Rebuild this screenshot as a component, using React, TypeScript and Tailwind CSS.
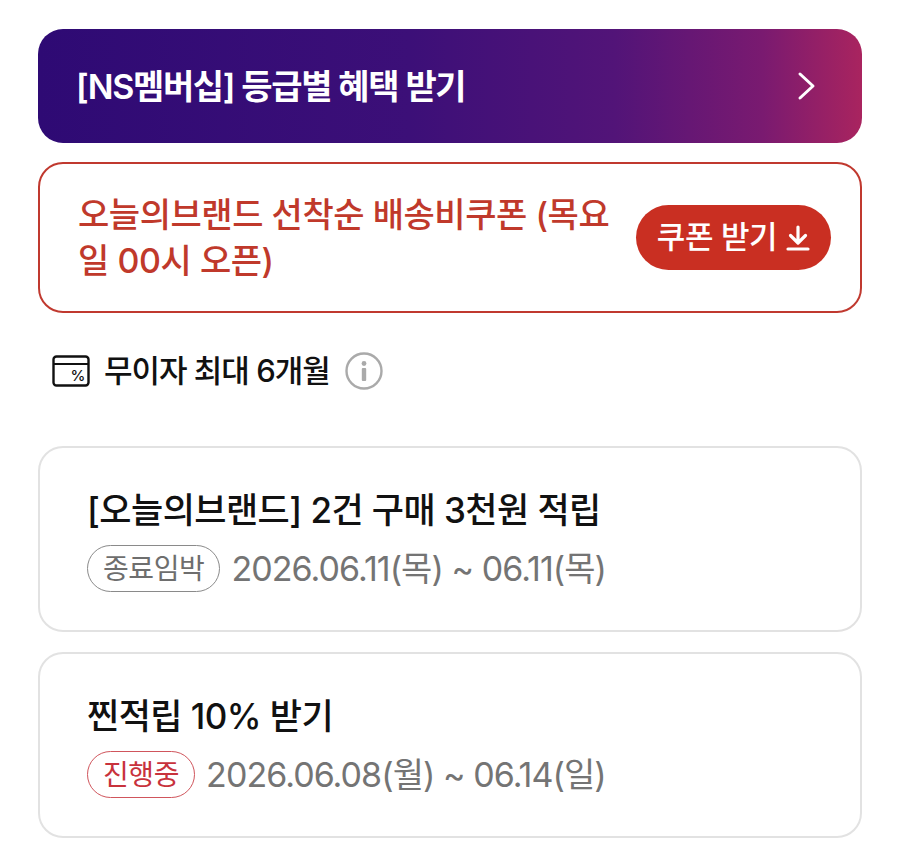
export default function App() {
  const font = { fontFamily: '"Inter","Noto Sans CJK KR",sans-serif' };
  return (
    <div style={font} className="w-[900px] h-[863px] overflow-hidden bg-white pt-[29px] pl-[38px] pr-[38px] flex flex-col">
      <div className="h-[114px] shrink-0 rounded-[25px] bg-[linear-gradient(90deg,#2e0a74_0%,#3c0f78_45%,#521478_70%,#7a1a70_88%,#a9245f_100%)] flex items-center justify-between pl-[38px] pr-[45px]">
        <span className="text-white text-[34px] font-semibold tracking-[-1.35px]">[NS멤버십] 등급별 혜택 받기</span>
        <svg width="20" height="30" viewBox="0 0 20 30" fill="none" stroke="white" strokeWidth="3" strokeLinecap="round" strokeLinejoin="round"><path d="M3 3l13 12L3 27" /></svg>
      </div>
      <div className="mt-[19px] h-[151px] shrink-0 rounded-[25px] border-2 border-[#c0392f] flex items-center pl-[38px] pr-[29px] justify-between">
        <div className="w-[540px] text-[#c0392b] text-[34px] leading-[46px] font-medium tracking-[-0.45px]">오늘의브랜드 선착순 배송비쿠폰 (목요<br />일 00시 오픈)</div>
        <div className="h-[65px] w-[195px] rounded-full bg-[#c92f22] flex items-center justify-center gap-[9px] text-white text-[31px] font-medium tracking-[-0.4px]">
          <span>쿠폰 받기</span>
          <svg width="24" height="26" viewBox="0 0 24 26" fill="none" stroke="white" strokeWidth="3.2" strokeLinecap="round" strokeLinejoin="round"><path d="M12 2v15M4.5 10.5 12 18l7.500-7.500M2 24h20" /></svg>
        </div>
      </div>
      <div className="mt-[36px] h-[44px] shrink-0 flex items-center pl-[14px]">
        <svg width="38" height="32" viewBox="0 0 38 32" fill="none" className="shrink-0">
          <rect x="1.5" y="1.5" width="35" height="29" rx="3" stroke="#111" strokeWidth="2.4" />
          <path d="M1.5 9h35" stroke="#111" strokeWidth="1.8" />
          <text x="26" y="26" fontSize="15" fontWeight="500" fill="#111" textAnchor="middle">%</text>
        </svg>
        <span className="ml-[14px] text-[#111] text-[31px] font-medium tracking-[-1px]">무이자 최대 6개월</span>
        <svg width="38" height="38" viewBox="0 0 38 38" fill="none" className="ml-[15px] shrink-0">
          <circle cx="19" cy="19" r="17.5" stroke="#aaa" strokeWidth="2.4" />
          <circle cx="19" cy="11.5" r="2.4" fill="#aaa" />
          <rect x="16.800" y="16" width="4.400" height="13" rx="1" fill="#aaa" />
        </svg>
      </div>
      <Card title="[오늘의브랜드] 2건 구매 3천원 적립" tag="종료임박" date="2026.06.11(목) ~ 06.11(목)" red={false} className="mt-[53px]" />
      <Card title="찐적립 10% 받기" tag="진행중" date="2026.06.08(월) ~ 06.14(일)" red className="mt-[20px]" />
    </div>
  );
}

function Card({ title, tag, date, red, className }: { title: string; tag: string; date: string; red: boolean; className: string }) {
  return (
    <div className={`h-[186px] shrink-0 rounded-[25px] border-2 border-[#e2e2e2] pl-[47px] pt-[38px] ${className}`}>
      <div className="text-[#111] text-[35px] leading-[48px] font-medium tracking-[-0.55px]">{title}</div>
      <div className="mt-[9px] flex items-center">
        <span className={red
          ? "h-[47px] rounded-full border border-[#d0555c] text-[#c8323c] text-[28px] px-[15px] flex items-center tracking-[-0.4px]"
          : "h-[47px] rounded-full border border-[#8a8a8a] text-[#6e6e6e] text-[28px] px-[15px] flex items-center tracking-[-0.4px]"}>{tag}</span>
        <span className="ml-[11px] text-[#747474] text-[34px] tracking-[-0.95px]">{date}</span>
      </div>
    </div>
  );
}
